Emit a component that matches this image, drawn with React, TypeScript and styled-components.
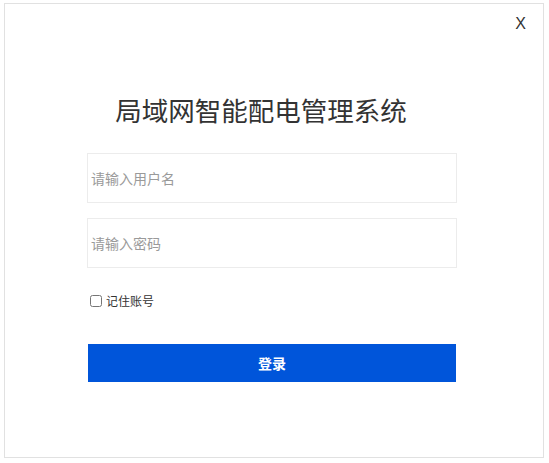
import styled, { createGlobalStyle } from "styled-components";

const GlobalStyle = createGlobalStyle`
  html, body {
    margin: 0;
    padding: 0;
    background: #fff;
    font-family: "Noto Sans CJK SC", "Noto Sans", sans-serif;
  }
`;

const Page = styled.div`
  padding: 3px 0 0 4px;
`;

const Dialog = styled.div`
  border: 1px solid #e1e1e1;
  box-sizing: border-box;
  height: 455px;
  position: relative;
  width: 540px;
`;

const CloseButton = styled.span`
  color: #333;
  cursor: pointer;
  font-family: "Liberation Sans", Arial, sans-serif;
  font-size: 16px;
  line-height: 16px;
  position: absolute;
  right: 17px;
  top: 12px;
`;

const Title = styled.h1`
  color: #333;
  font-size: 26.5px;
  font-weight: 400;
  line-height: 36px;
  margin: 0;
  padding: 88px 26px 0 0;
  text-align: center;
`;

const Form = styled.form`
  display: flex;
  flex-direction: column;
  margin: 25px 0 0 82px;
  width: 370px;
`;

const TextInput = styled.input`
  border: 1px solid #ececec;
  box-sizing: border-box;
  color: #333;
  font-family: inherit;
  font-size: 14px;
  height: 50px;
  margin-bottom: 15px;
  outline: none;
  padding: 0 3px;
  width: 100%;

  &::placeholder {
    color: #9a9a9a;
  }
`;

const RememberRow = styled.label`
  align-items: center;
  color: #333;
  display: flex;
  font-size: 12px;
  gap: 2px;
  margin-top: 9px;
  padding-left: 2px;
`;

const CheckBox = styled.input`
  height: 12px;
  margin: 0 2px 0 1px;
  width: 12px;
`;

const SubmitButton = styled.button`
  background: #0055da;
  border: none;
  color: #fff;
  cursor: pointer;
  font-family: inherit;
  font-size: 14px;
  font-weight: 700;
  height: 38px;
  margin: 35px 0 0 1px;
  width: 368px;
`;

export default function App() {
  return (
    <>
      <GlobalStyle />
      <Page>
        <Dialog>
          <CloseButton>X</CloseButton>
          <Title>局域网智能配电管理系统</Title>
          <Form onSubmit={(e) => e.preventDefault()}>
            <TextInput type="text" placeholder="请输入用户名" />
            <TextInput type="password" placeholder="请输入密码" />
            <RememberRow>
              <CheckBox type="checkbox" />
              记住账号
            </RememberRow>
            <SubmitButton type="submit">登录</SubmitButton>
          </Form>
        </Dialog>
      </Page>
    </>
  );
}
